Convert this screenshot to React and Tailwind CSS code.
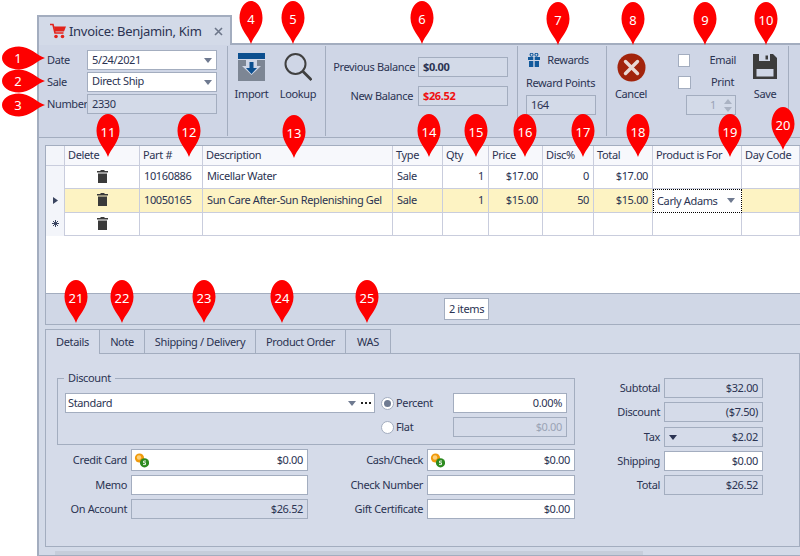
import React from "react";

const Pin = ({ x, y, n, h }) => (
  <div className="absolute w-0 h-0" style={{ left: x, top: y }}>
    <svg width="46" height="46" viewBox="-23 -45 46 46" className="absolute overflow-visible" style={{ left: -23, top: -45, transform: h ? "rotate(-90deg)" : undefined, transformOrigin: "23px 45px" }}>
      <path d="M0 0C-2.5 -8 -11.5 -15 -11.5 -26C-11.5 -36 -6 -43 0 -43C6 -43 11.5 -36 11.5 -26C11.5 -15 2.5 -8 0 0Z" fill="#fe0000" />
    </svg>
    <span className="absolute w-6 text-center text-white text-[13px] leading-[16px] tracking-normal font-['Liberation_Sans',sans-serif]" style={{ left: h ? -39 : -12, top: h ? -8 : -33 }}>{n}</span>
  </div>
);

const Box = ({ className = "", children }) => (
  <div className={`flex items-center border border-[#a3adbf] px-[4px] whitespace-nowrap ${className}`}>{children}</div>
);

const Caret = ({ c = "#6f7a90" }) => (
  <svg width="8" height="5" viewBox="0 0 8 5" className="shrink-0"><path d="M0 0H8L4 5Z" fill={c} /></svg>
);

const Coins = () => (
  <svg width="15" height="15" viewBox="0 0 15 15" className="shrink-0">
    <circle cx="5.5" cy="5" r="4.6" fill="#f09a0c" />
    <circle cx="5" cy="4.5" r="2.2" fill="#fcd07a" />
    <circle cx="10.5" cy="9.8" r="4.6" fill="#2c8a1f" />
    <path d="M12 8H9.6V9.8H11.5V11.6H9" stroke="#fff" strokeWidth="0.9" fill="none" />
  </svg>
);

const Trash = () => (
  <svg width="11" height="13" viewBox="0 0 11 13">
    <path d="M3.5 0H7.5V1H11V2.6H0V1H3.5ZM1 3.6H10V13H1Z" fill="#3a3a3a" />
  </svg>
);

const H = ({ children }) => (
  <div className="flex items-center pl-[3px] pb-[2px] bg-[#f7f8fc] border-r border-b border-[#c9cddd] overflow-hidden whitespace-nowrap">{children}</div>
);

const C = ({ children, r, sel, first }) => (
  <div className={`flex items-center px-[4px] pb-[2px] border-r border-b border-[#c9cddd] whitespace-nowrap overflow-hidden ${r ? "justify-end" : ""} ${first ? "justify-center" : ""} ${sel ? "bg-[#fdf3c3]" : "bg-white"}`}>{children}</div>
);

const Ind = ({ children }) => (
  <div className="flex items-center justify-center pb-[2px] bg-[#f3f5fa] border-r border-[#c9cddd]">{children}</div>
);

const Row = ({ label, children, w }) => (
  <div className="flex items-center gap-[4px]">
    <div className={`${w} text-right whitespace-nowrap`}>{label}</div>
    {children}
  </div>
);

const Tab = ({ w, active, children }) => (
  <div className={`flex items-center justify-center h-[25px] border-t border-r border-[#a3adbf] ${w} ${active ? "bg-[#d5dbe9] border-l" : "bg-[#d0d7e6] border-b"}`}>{children}</div>
);

const pins = [
  [45, 58, 1, 1], [45, 81, 2, 1], [45, 105, 3, 1],
  [251, 44, 4], [293, 44, 5], [422, 44, 6], [558, 45, 7], [633, 45, 8], [705, 45, 9], [766, 45, 10],
  [108, 157, 11], [189, 157, 12], [294, 158, 13], [429, 157, 14], [476, 157, 15], [525, 157, 16], [583, 157, 17], [638, 157, 18], [730, 157, 19], [783, 150, 20],
  [76, 323, 21], [122, 323, 22], [204, 323, 23], [282, 323, 24], [367, 323, 25],
];

export default function App() {
  return (
    <div className="relative w-[800px] h-[556px] overflow-hidden bg-white text-[11px] leading-[14px] tracking-[-0.36px] text-[#2b3352] font-['Noto_Sans',sans-serif]">
      {/* document tab */}
      <div className="h-[44px] pt-[15px] pl-[37px]">
        <div className="flex items-center w-[195px] h-[30px] bg-[#d3dae8] border-2 border-b-0 border-[#a3adbf] pl-[11px] gap-[3px] text-[13px] tracking-[-0.3px] relative z-10">
          <svg width="16" height="16" viewBox="0 0 16 16" className="shrink-0">
            <path d="M0 1.5H3L5 10H13.5" stroke="#e3231b" strokeWidth="1.6" fill="none" />
            <path d="M4 3.5H16L14 8.5H5Z" fill="#e3231b" />
            <circle cx="6" cy="13.5" r="1.8" fill="#e3231b" />
            <circle cx="12.5" cy="13.5" r="1.8" fill="#e3231b" />
          </svg>
          <span className="whitespace-nowrap">Invoice: Benjamin, Kim</span>
          <svg width="9" height="9" viewBox="0 0 9 9" className="ml-auto mr-[7px] shrink-0"><path d="M1 1L8 8M8 1L1 8" stroke="#6c7689" strokeWidth="1.6" /></svg>
        </div>
      </div>

      {/* main panel */}
      <div className="ml-[37px] h-[513px] border-l-2 border-t-2 border-[#a3adbf] bg-[#d3dae8] flex flex-col -mt-px">
        {/* toolbar */}
        <div className="flex h-[93px] bg-[#cfd6e6] border-b border-[#a3adbf] shrink-0">
          <div className="w-[189px] my-[1px] border-r border-[#a3adbf] pl-[8px] pt-[4px] flex flex-col gap-[2px]">
            <div className="flex items-center h-[20px]">
              <span className="w-[40px]">Date</span>
              <Box className="w-[130px] h-[20px] bg-white justify-between pr-[4px]">5/24/2021<Caret /></Box>
            </div>
            <div className="flex items-center h-[20px]">
              <span className="w-[40px]">Sale</span>
              <Box className="w-[130px] h-[20px] bg-white justify-between pr-[4px]"><span className="-mt-[3px]">Direct Ship</span><Caret /></Box>
            </div>
            <div className="flex items-center h-[20px]">
              <span className="w-[40px]">Number</span>
              <Box className="w-[130px] h-[20px] bg-[#d3dae8]">2330</Box>
            </div>
          </div>
          <div className="w-[98px] my-[1px] border-r border-[#a3adbf] flex pt-[7px]">
            <div className="w-[47px] flex flex-col items-center gap-[6px]">
              <svg width="27" height="28" viewBox="0 0 27 28">
                <path d="M0 7H8V13H4L13.5 22L23 13H19V7H27V28H0Z" fill="#7d8694" />
                <rect width="27" height="6" fill="#0c4f8f" />
                <path d="M11.5 9H15.5V15H19L13.5 21L8 15H11.5Z" fill="#0c4f8f" />
              </svg>
              <span>Import</span>
            </div>
            <div className="w-[44px] flex flex-col items-center gap-[6px] ml-[1px]">
              <svg width="28" height="28" viewBox="0 0 28 28" fill="none">
                <circle cx="11.5" cy="11" r="10" stroke="#404040" strokeWidth="2" />
                <path d="M18.5 18L27.5 27" stroke="#404040" strokeWidth="2.8" />
              </svg>
              <span>Lookup</span>
            </div>
          </div>
          <div className="w-[192px] my-[1px] border-r border-[#a3adbf] pt-[11px] flex flex-col gap-[9px]">
            <div className="flex items-center justify-end gap-[3px] pr-[9px]">
              <span className="whitespace-nowrap">Previous Balance</span>
              <Box className="w-[90px] h-[20px] bg-[#d3dae8] font-bold">$0.00</Box>
            </div>
            <div className="flex items-center justify-end gap-[5px] pr-[9px]">
              <span className="whitespace-nowrap">New Balance</span>
              <Box className="w-[90px] h-[20px] bg-[#d3dae8] font-bold text-[#f01010]">$26.52</Box>
            </div>
          </div>
          <div className="w-[89px] my-[1px] border-r border-[#a3adbf] flex flex-col items-center pt-[7px]">
            <div className="flex items-center gap-[7px] h-[14px] -ml-[7px]">
              <svg width="12" height="14" viewBox="0 0 12 14">
                <circle cx="3.6" cy="1.8" r="1.5" fill="none" stroke="#125a9c" strokeWidth="1.1" />
                <circle cx="8.4" cy="1.8" r="1.5" fill="none" stroke="#125a9c" strokeWidth="1.1" />
                <path d="M0 4H5.3V7H0ZM6.7 4H12V7H6.7ZM1 8H5.3V14H1ZM6.7 8H11V14H6.7Z" fill="#125a9c" />
              </svg>
              <span>Rewards</span>
            </div>
            <div className="mt-[9px] -ml-[3px] whitespace-nowrap">Reward Points</div>
            <Box className="w-[70px] h-[20px] mt-[5px] bg-[#d3dae8] -ml-[2px]">164</Box>
          </div>
          <div className="w-[182px] my-[1px] border-r border-[#a3adbf] flex">
            <div className="w-[48px] flex flex-col items-center gap-[5px] pt-[7px]">
              <svg width="29" height="29" viewBox="0 0 29 29">
                <circle cx="14.5" cy="14.5" r="14" fill="#a2240c" />
                <path d="M8.5 8.5L20.5 20.5M20.5 8.5L8.5 20.5" stroke="#e8d9d5" strokeWidth="3.4" strokeLinecap="round" />
              </svg>
              <span>Cancel</span>
            </div>
            <div className="w-[58px] ml-[23px] pt-[7px] flex flex-col">
              <div className="flex items-center h-[14px]">
                <div className="w-[13px] h-[13px] bg-white border border-[#a3adbf]" />
                <span className="ml-[20px]">Email</span>
              </div>
              <div className="flex items-center h-[14px] mt-[8px]">
                <div className="w-[13px] h-[13px] bg-white border border-[#a3adbf]" />
                <span className="ml-[20px]">Print</span>
              </div>
              <div className="flex items-center justify-end h-[20px] w-[50px] ml-[8px] mt-[6px] border border-[#a3adbf] bg-[#d3dae8] text-[#9aa3b5]">
                <span className="mr-[8px]">1</span>
                <div className="flex flex-col gap-[3px] mr-[3px]">
                  <svg width="8" height="5" viewBox="0 0 8 5"><path d="M0 5H8L4 0Z" fill="#aab2c2" /></svg>
                  <svg width="8" height="5" viewBox="0 0 8 5"><path d="M0 0H8L4 5Z" fill="#aab2c2" /></svg>
                </div>
              </div>
            </div>
            <div className="flex flex-col items-center gap-[8px] pt-[8px] ml-[17px] w-[24px]">
              <svg width="24" height="25" viewBox="0 0 24 25">
                <path d="M0 0H20L24 4V25H0Z" fill="#3c3c3c" />
                <rect x="6" y="0" width="11" height="7" fill="#cfd6e6" />
                <rect x="12.5" y="1.5" width="2.5" height="4" fill="#3c3c3c" />
                <rect x="3.5" y="15" width="17" height="7.5" fill="#cfd6e6" />
              </svg>
              <span>Save</span>
            </div>
          </div>
        </div>

        <div className="pl-[6px] pt-[7px] shrink-0">
          {/* grid */}
          <div className="h-[180px] border border-r-0 border-[#a3adbf] flex flex-col bg-white">
            <div className="grid grid-cols-[19px_75px_63px_190px_50px_46px_54px_51px_59px_89px_58px] grid-rows-[20px_23px_24px_23px]">
              <div className="bg-[#f3f5fa] border-r border-b border-[#c9cddd]" />
              <H>Delete</H><H>Part #</H><H>Description</H><H>Type</H><H>Qty</H><H>Price</H><H>Disc%</H><H>Total</H><H>Product is For</H><H>Day Code</H>

              <Ind />
              <C first><Trash /></C><C>10160886</C><C>Micellar Water</C><C>Sale</C><C r>1</C><C r>$17.00</C><C r>0</C><C r>$17.00</C><C /><C />

              <Ind><svg width="5" height="7" viewBox="0 0 5 7"><path d="M0 0L5 3.5L0 7Z" fill="#3a4560" /></svg></Ind>
              <C first sel><Trash /></C><C sel>10050165</C><C sel>Sun Care After-Sun Replenishing Gel</C><C sel>Sale</C><C r sel>1</C><C r sel>$15.00</C><C r sel>50</C><C r sel>$15.00</C>
              <div className="flex items-center justify-between pl-[3px] pr-[6px] pb-[1px] bg-white border border-dotted border-black">Carly Adams<Caret /></div>
              <C sel />

              <Ind><svg width="7" height="7" viewBox="0 0 7 7"><path d="M3.5 0V7M0 3.5H7M1 1L6 6M6 1L1 6" stroke="#3a4560" strokeWidth="1" /></svg></Ind>
              <C first><Trash /></C><C /><C /><C /><C /><C /><C /><C /><C /><C />
            </div>
            <div className="flex-1 border-b border-[#a3adbf]" />
            <div className="h-[30px] bg-[#d0d7e6] flex items-start pl-[398px] pt-[4px] shrink-0">
              <div className="w-[45px] h-[22px] flex items-center justify-center bg-white border border-[#a3adbf] whitespace-nowrap">2 items</div>
            </div>
          </div>

          {/* tabs */}
          <div className="flex mt-[4px]">
            <Tab w="w-[55px]" active>Details</Tab>
            <Tab w="w-[45px]">Note</Tab>
            <Tab w="w-[111px]">Shipping / Delivery</Tab>
            <Tab w="w-[90px]">Product Order</Tab>
            <Tab w="w-[45px]">WAS</Tab>
            <div className="flex-1 border-b border-[#a3adbf]" />
          </div>

          {/* tab panel */}
          <div className="h-[193px] border border-t-0 border-[#a3adbf] bg-[#d5dbe9] flex pl-[11px] pt-[24px]">
            <div className="w-[518px] shrink-0">
              <div className="relative w-[518px] h-[67px] border border-[#a3adbf] pl-[7px] pt-[14px]">
                <span className="absolute left-[6px] -top-[8px] px-[4px] bg-[#d5dbe9]">Discount</span>
                <div className="flex items-center">
                  <div className="flex items-center justify-between w-[310px] h-[20px] bg-white border border-[#a3adbf] pl-[2px] pr-[3px]">
                    Standard
                    <div className="flex items-center gap-[5px]">
                      <Caret />
                      <svg width="10" height="2" viewBox="0 0 10 2"><path d="M0 0H2V2H0ZM4 0H6V2H4ZM8 0H10V2H8Z" fill="#222" /></svg>
                    </div>
                  </div>
                  <div className="ml-[6px] w-[13px] h-[13px] rounded-full border border-[#a3adbf] bg-white flex items-center justify-center"><div className="w-[7px] h-[7px] rounded-full bg-[#6f7b92]" /></div>
                  <span className="w-[59px] pl-[2px]">Percent</span>
                  <Box className="w-[114px] h-[20px] bg-white justify-end">0.00%</Box>
                </div>
                <div className="flex items-center mt-[4px] pl-[316px]">
                  <div className="w-[13px] h-[13px] rounded-full border border-[#a3adbf] bg-white" />
                  <span className="w-[59px] pl-[2px]">Flat</span>
                  <Box className="w-[114px] h-[20px] justify-end text-[#9aa3b5]">$0.00</Box>
                </div>
              </div>
              <div className="flex mt-[4px]">
                <div className="flex flex-col gap-[4px]">
                  <Row label="Credit Card" w="w-[70px]"><Box className="w-[177px] h-[22px] bg-white justify-between pl-[2px]"><Coins />$0.00</Box></Row>
                  <Row label="Memo" w="w-[70px]"><Box className="w-[177px] h-[20px] bg-white" /></Row>
                  <Row label="On Account" w="w-[70px]"><Box className="w-[177px] h-[20px] justify-end">$26.52</Box></Row>
                </div>
                <div className="flex flex-col gap-[4px]">
                  <Row label="Cash/Check" w="w-[115px]"><Box className="w-[148px] h-[22px] bg-white justify-between pl-[2px]"><Coins />$0.00</Box></Row>
                  <Row label="Check Number" w="w-[115px]"><Box className="w-[148px] h-[20px] bg-white" /></Row>
                  <Row label="Gift Certificate" w="w-[115px]"><Box className="w-[148px] h-[20px] bg-white justify-end">$0.00</Box></Row>
                </div>
              </div>
            </div>
            <div className="flex flex-col">
              <Row label="Subtotal" w="w-[85px]"><Box className="w-[99px] h-[20px] justify-end">$32.00</Box></Row>
              <div className="mt-[4px]"><Row label="Discount" w="w-[85px]"><Box className="w-[99px] h-[20px] justify-end">($7.50)</Box></Row></div>
              <div className="mt-[5px]"><Row label="Tax" w="w-[85px]"><Box className="w-[99px] h-[20px] justify-between"><Caret c="#2b3352" />$2.02</Box></Row></div>
              <div className="mt-[4px]"><Row label="Shipping" w="w-[85px]"><Box className="w-[99px] h-[20px] bg-white justify-end">$0.00</Box></Row></div>
              <div className="mt-[4px]"><Row label="Total" w="w-[85px]"><Box className="w-[99px] h-[20px] justify-end">$26.52</Box></Row></div>
            </div>
          </div>
        </div>
        {/* bottom scroll strip */}
        <div className="flex-1 flex items-end border-b border-[#a3adbf]">
          <div className="ml-[16px] w-[588px] h-[4px] bg-[#c6cdda]" />
        </div>
      </div>

      {pins.map(([x, y, n, h]) => <Pin key={n} x={x} y={y} n={n} h={h} />)}
    </div>
  );
}
